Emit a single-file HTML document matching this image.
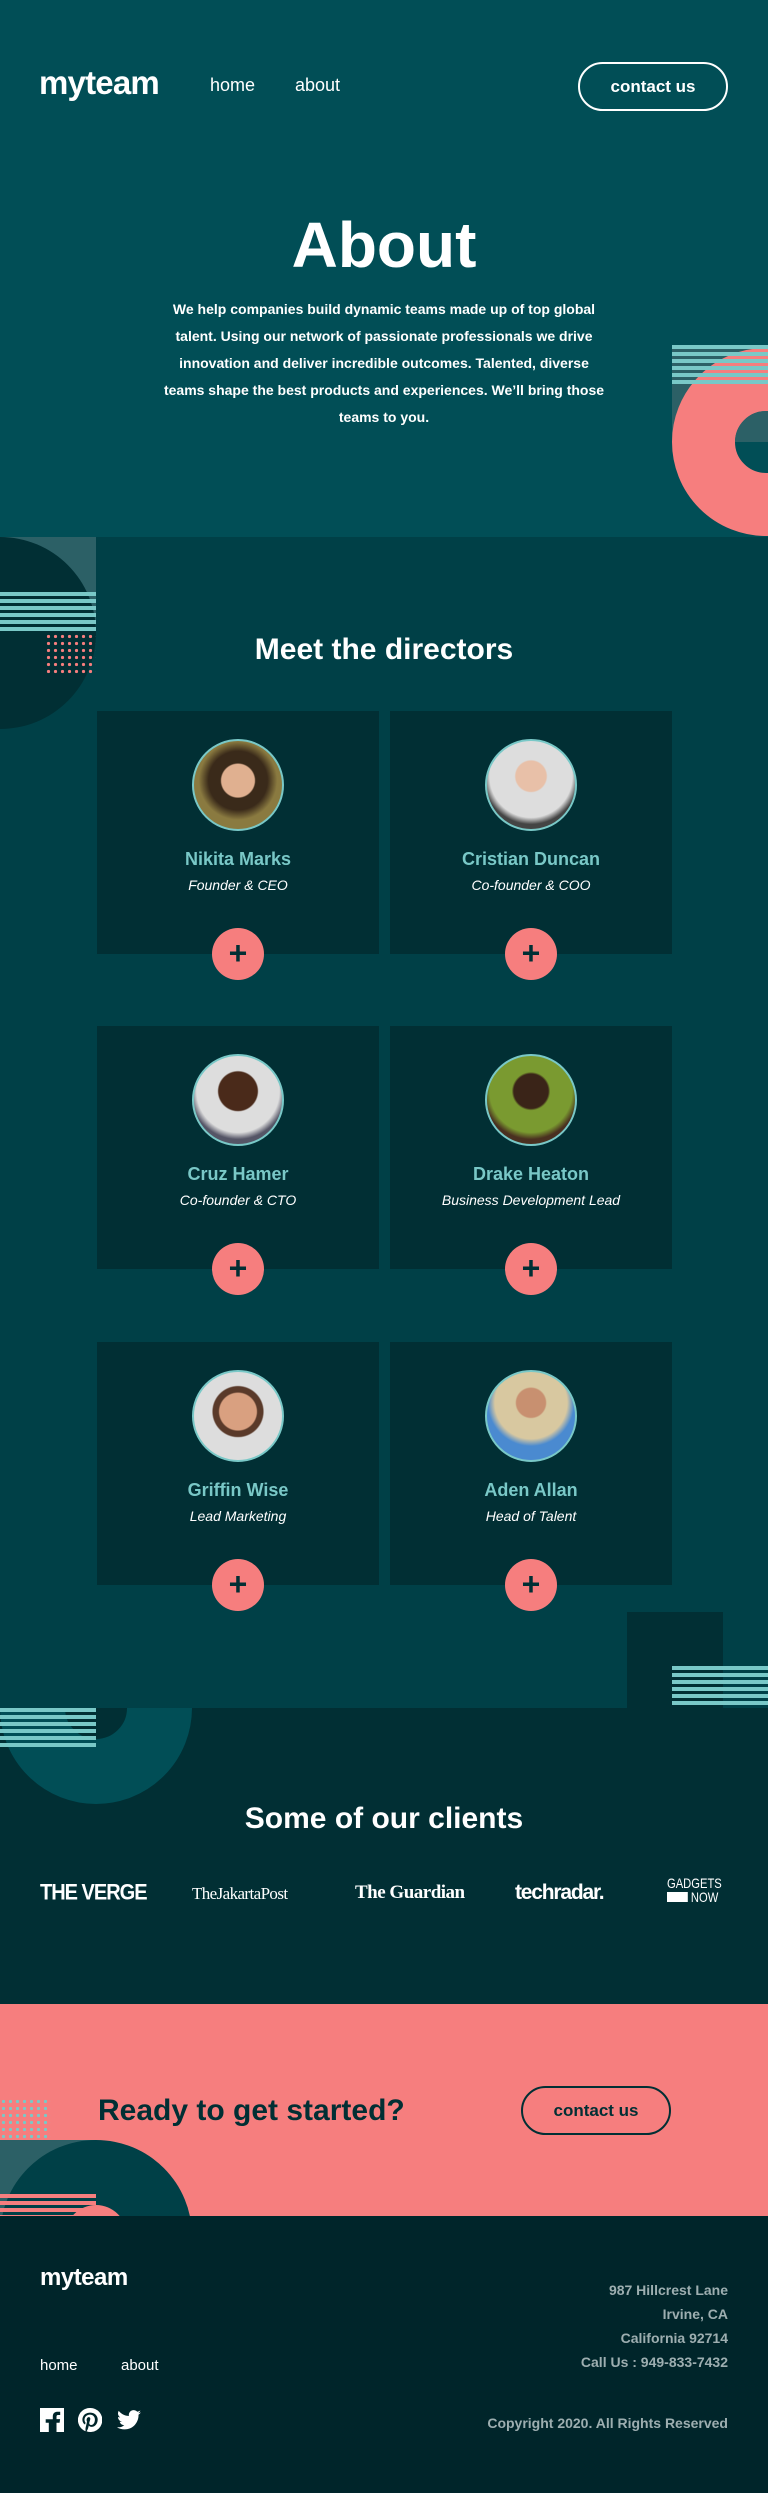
<!DOCTYPE html>
<html><head><meta charset="utf-8">
<style>
*{margin:0;padding:0;box-sizing:border-box}
body{width:768px;height:2493px;position:relative;overflow:hidden;font-family:"Liberation Sans",sans-serif;background:#00252a}
.a{position:absolute}
.c{text-align:center}
.stripes{background:repeating-linear-gradient(#79c8c7 0 4px,transparent 4px 7px)}
.card{position:absolute;width:282px;height:243px;background:#012f34;text-align:center}
.av{position:absolute;left:95px;top:28px;width:92px;height:92px;border-radius:50%;border:2px solid #79c8c7}
.nm{position:absolute;left:0;right:0;top:138px;color:#79c8c7;font-weight:bold;font-size:18px}
.rl{position:absolute;left:0;right:0;top:166px;color:#fff;font-style:italic;font-size:14px}
.pl{position:absolute;left:115px;top:217px;width:52px;height:52px;border-radius:50%;background:#f67e7e;color:#012f34;font-size:32px;font-weight:bold;line-height:50px}
</style></head><body>
<!-- hero -->
<div class="a" style="left:0;top:0;width:768px;height:537px;background:#014e56;overflow:hidden">
  <div class="a" style="left:672px;top:345px;width:96px;height:97px;background:#2c6066"></div>
  <div class="a" style="left:672px;top:348px;width:188px;height:188px;border-radius:50%;border:63px solid #f67e7e"></div>
  <div class="a" style="left:735px;top:411px;width:62px;height:31px;border-radius:31px 31px 0 0;background:#2c6066"></div>
  <div class="a stripes" style="left:672px;top:345px;width:96px;height:42px"></div>
  <div class="a" style="left:39px;top:64px;color:#fff;font-weight:bold;font-size:33px;letter-spacing:-0.8px">myteam</div>
  <div class="a" style="left:210px;top:75px;color:#fff;font-size:18px">home</div>
  <div class="a" style="left:295px;top:75px;color:#fff;font-size:18px">about</div>
  <div class="a c" style="left:578px;top:62px;width:150px;height:49px;border:2px solid #fff;border-radius:25px;color:#fff;font-size:17px;font-weight:bold;line-height:45px">contact us</div>
  <div class="a c" style="left:0;width:768px;top:208px;color:#fff;font-size:64px;font-weight:bold">About</div>
  <div class="a c" style="left:160px;width:448px;top:296px;color:#fff;font-size:14px;line-height:27px;font-weight:bold">We help companies build dynamic teams made up of top global talent. Using our network of passionate professionals we drive innovation and deliver incredible outcomes. Talented, diverse teams shape the best products and experiences. We’ll bring those teams to you.</div>
</div>
<!-- directors -->
<div class="a" style="left:0;top:537px;width:768px;height:1171px;background:#004047;overflow:hidden">
  <div class="a" style="left:0;top:0;width:96px;height:100px;background:#2c6066"></div>
  <div class="a" style="left:-96px;top:0;width:192px;height:192px;border-radius:50%;background:#012f34"></div>
  <div class="a stripes" style="left:0;top:55px;width:96px;height:41px"></div>
  <div class="a" style="left:45px;top:96px;width:51px;height:43px;background-image:radial-gradient(#f67e7e 1.5px,transparent 1.8px);background-size:7px 7px"></div>
  <div class="a" style="left:627px;top:1075px;width:96px;height:96px;background:#012f34"></div>
  <div class="a stripes" style="left:672px;top:1129px;width:96px;height:42px"></div>
  <div class="a c" style="left:0;width:768px;top:96px;color:#fff;font-size:30px;font-weight:bold">Meet the directors</div>
</div>
<div class="card" style="left:97px;top:711px"><div class="av" style="background:radial-gradient(circle at 50% 45%,#e0b090 0 25%,#3a2a1a 27% 45%,#8a7a40 60%)"></div><div class="nm">Nikita Marks</div><div class="rl">Founder &amp; CEO</div><div class="pl">+</div></div>
<div class="card" style="left:390px;top:711px"><div class="av" style="background:radial-gradient(circle at 50% 40%,#e8c0a8 0 22%,#ddd 24% 60%,#444 70%)"></div><div class="nm">Cristian Duncan</div><div class="rl">Co-founder &amp; COO</div><div class="pl">+</div></div>
<div class="card" style="left:97px;top:1026px"><div class="av" style="background:radial-gradient(circle at 50% 40%,#4a2a1a 0 28%,#ddd 30% 60%,#556 70%)"></div><div class="nm">Cruz Hamer</div><div class="rl">Co-founder &amp; CTO</div><div class="pl">+</div></div>
<div class="card" style="left:390px;top:1026px"><div class="av" style="background:radial-gradient(circle at 50% 40%,#3a2418 0 25%,#7a9a30 28% 60%,#4a3020 70%)"></div><div class="nm">Drake Heaton</div><div class="rl">Business Development Lead</div><div class="pl">+</div></div>
<div class="card" style="left:97px;top:1342px"><div class="av" style="background:radial-gradient(circle at 50% 45%,#d9a080 0 28%,#5a3a2a 30% 38%,#ddd 40%)"></div><div class="nm">Griffin Wise</div><div class="rl">Lead Marketing</div><div class="pl">+</div></div>
<div class="card" style="left:390px;top:1342px"><div class="av" style="background:radial-gradient(circle at 50% 35%,#c89070 0 20%,#d8c8a0 22% 50%,#4a8ad0 60%)"></div><div class="nm">Aden Allan</div><div class="rl">Head of Talent</div><div class="pl">+</div></div>
<!-- clients -->
<div class="a" style="left:0;top:1708px;width:768px;height:296px;background:#012f34;overflow:hidden">
  <div class="a" style="left:0;top:-96px;width:192px;height:192px;border-radius:50%;border:65px solid #014e56"></div>
  <div class="a stripes" style="left:0;top:0;width:96px;height:41px"></div>
  <div class="a c" style="left:0;width:768px;top:94px;color:#fff;font-size:30px;font-weight:bold">Some of our clients</div>
  <div class="a" style="left:40px;top:174px;color:#fff;font-size:20px;font-weight:900;letter-spacing:-1px;transform:scaleY(1.1)">THE VERGE</div>
  <div class="a" style="left:192px;top:176px;color:#fff;font-family:'Liberation Serif',serif;font-size:17px;letter-spacing:-0.6px">TheJakartaPost</div>
  <div class="a" style="left:355px;top:174px;color:#fff;font-family:'Liberation Serif',serif;font-size:19px;font-weight:bold;letter-spacing:-0.5px">The Guardian</div>
  <div class="a" style="left:515px;top:173px;color:#fff;font-size:21px;font-weight:bold;letter-spacing:-1.2px">techradar.</div>
  <div class="a" style="left:667px;top:168px;color:#fff;font-size:14px;line-height:14px;transform:scaleX(.8);transform-origin:left">GADGETS<br><span style="display:inline-block;width:26px;height:10px;background:#fff"></span> NOW</div>
</div>
<!-- CTA -->
<div class="a" style="left:0;top:2004px;width:768px;height:212px;background:#f67e7e;overflow:hidden">
  <div class="a" style="left:0;top:94px;width:51px;height:43px;background-image:radial-gradient(#79c8c7 1.5px,transparent 1.8px);background-size:7px 7px"></div>
  <div class="a" style="left:0;top:136px;width:96px;height:76px;background:#2c6066"></div>
  <div class="a" style="left:0;top:136px;width:192px;height:192px;border-radius:50%;background:#004047"></div>
  <div class="a" style="left:65px;top:201px;width:62px;height:62px;border-radius:50%;background:#f67e7e"></div>
  <div class="a" style="left:0;top:190px;width:96px;height:22px;background:repeating-linear-gradient(#f67e7e 0 4px,transparent 4px 7px)"></div>
  <div class="a" style="left:98px;top:90px;color:#012f34;font-size:30px;font-weight:bold">Ready to get started?</div>
  <div class="a c" style="left:521px;top:82px;width:150px;height:49px;border:2px solid #012f34;border-radius:25px;color:#012f34;font-size:17px;font-weight:bold;line-height:45px">contact us</div>
</div>
<!-- footer -->
<div class="a" style="left:0;top:2216px;width:768px;height:277px;background:#00252a">
  <div class="a" style="left:40px;top:48px;color:#fff;font-size:24px;font-weight:bold;letter-spacing:-0.5px">myteam</div>
  <div class="a" style="left:40px;top:141px;color:#fff;font-size:15px">home</div>
  <div class="a" style="left:121px;top:141px;color:#fff;font-size:15px">about</div>
  <svg class="a" style="left:40px;top:192px" width="24" height="24" viewBox="0 0 24 24"><path fill="#fff" d="M0 0h24v24h-7.5v-9.3h3.1l.5-3.6h-3.6V8.8c0-1 .3-1.8 1.8-1.8h1.9V3.8c-.3 0-1.5-.1-2.8-.1-2.8 0-4.6 1.7-4.6 4.8v2.7H5.7v3.6h3.1V24H0z"/></svg>
  <svg class="a" style="left:78px;top:192px" width="24" height="24" viewBox="0 0 24 24"><path fill="#fff" d="M12 0a12 12 0 0 0-4.4 23.2c-.1-.9-.2-2.4 0-3.4l1.4-6s-.4-.7-.4-1.8c0-1.7 1-2.9 2.2-2.9 1 0 1.5.8 1.5 1.7 0 1-.7 2.6-1 4-.3 1.2.6 2.2 1.8 2.2 2.1 0 3.8-2.2 3.8-5.5 0-2.9-2.1-4.9-5-4.9-3.4 0-5.4 2.6-5.4 5.2 0 1 .4 2.1.9 2.7.1.1.1.2.1.3l-.3 1.4c-.1.2-.2.3-.4.2-1.5-.7-2.4-2.9-2.4-4.6 0-3.8 2.7-7.2 7.9-7.2 4.1 0 7.4 3 7.4 6.9 0 4.1-2.6 7.4-6.2 7.4-1.2 0-2.3-.6-2.7-1.4l-.7 2.8c-.3 1-1 2.3-1.5 3.1A12 12 0 1 0 12 0z"/></svg>
  <svg class="a" style="left:117px;top:194px" width="24" height="20" viewBox="0 0 24 20"><path fill="#fff" d="M24 2.4c-.9.4-1.8.7-2.8.8 1-.6 1.8-1.6 2.2-2.7-1 .6-2 1-3.1 1.2A4.9 4.9 0 0 0 11.9 6 14 14 0 0 1 1.7.9a4.9 4.9 0 0 0 1.5 6.6c-.8 0-1.6-.3-2.2-.6 0 2.4 1.7 4.4 3.9 4.8-.7.2-1.5.2-2.2.1.6 2 2.4 3.4 4.6 3.4A9.9 9.9 0 0 1 0 17.2 14 14 0 0 0 7.5 19.4c9.1 0 14-7.5 14-14v-.6c1-.7 1.8-1.6 2.5-2.4z"/></svg>
  <div class="a" style="right:40px;top:62px;text-align:right;color:#b9c6c8;font-size:14px;line-height:24px;font-weight:bold;opacity:.85">987 Hillcrest Lane<br>Irvine, CA<br>California 92714<br>Call Us : 949-833-7432</div>
  <div class="a" style="right:40px;top:199px;color:#b9c6c8;font-size:14px;font-weight:bold;opacity:.85">Copyright 2020. All Rights Reserved</div>
</div>
</body></html>
